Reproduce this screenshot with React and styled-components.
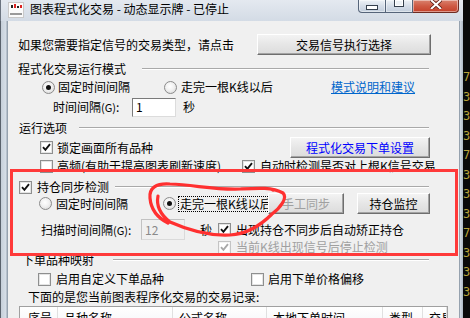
import React from 'react'
import styled, { createGlobalStyle } from 'styled-components'

const GlobalStyle = createGlobalStyle`
  html, body {
    margin: 0;
    padding: 0;
  }
  body {
    width: 470px;
    height: 318px;
    overflow: hidden;
    background: #0b0b0b;
    font-family: "Noto Sans CJK SC", "Noto Sans", sans-serif;
    font-size: 12px;
    line-height: 14px;
    color: #000;
  }
`

const Screen = styled.div`
  position: relative;
  width: 470px;
  height: 318px;
  display: flex;
  overflow: hidden;
`

const Window = styled.div`
  width: 463px;
  display: flex;
  flex-direction: column;
  flex: none;
`

const TitleBar = styled.div`
  height: 21px;
  display: flex;
  align-items: flex-start;
  background: linear-gradient(to bottom, #e4e9f0, #d3dbe5);
  box-shadow: inset 1px 0 0 #6b7480;
`

const AppIcon = styled.svg`
  margin: 2px 0 0 8px;
  flex: none;
`

const Title = styled.div`
  margin-left: 6px;
  line-height: 17px;
  white-space: nowrap;
`

const Caption = styled.div`
  margin-left: auto;
  margin-right: 4px;
  display: flex;
`

const CapButton = styled.div`
  box-sizing: border-box;
  width: ${p => p.$w}px;
  height: 13px;
  display: flex;
  align-items: flex-start;
  justify-content: center;
  overflow: hidden;
  border: 1px solid ${p => (p.$close ? '#6e2c22' : '#56657a')};
  border-top: none;
  border-left-width: ${p => (p.$first ? 1 : 0)}px;
  border-radius: ${p => (p.$first ? '0 0 0 4px' : p.$close ? '0 0 4px 0' : '0')};
  background: ${p =>
    p.$close
      ? 'linear-gradient(to bottom, #d9826f, #cf5a44 50%, #c4402a)'
      : 'linear-gradient(to bottom, #eef2f7, #d5dde8 50%, #c2cedc)'};
  box-shadow: inset 0 0 0 1px rgba(255, 255, 255, 0.45);
`

const MinGlyph = styled.div`
  margin-top: 5px;
  width: 10px;
  height: 3px;
  border: 1px solid #36404d;
  background: #fff;
`

const MaxGlyph = styled.div`
  margin-top: 0px;
  width: 8px;
  height: 6px;
  border: 1px solid #36404d;
  border-top: none;
  background: #eef2f6;
  box-shadow: inset 0 0 0 1px #fff;
`

const WindowBody = styled.div`
  display: flex;
  flex: 1;
  min-height: 0;
`

const LeftFrame = styled.div`
  width: 8px;
  flex: none;
  background: linear-gradient(
    to right,
    #5a626c 0,
    #5a626c 1px,
    #c6cfd9 1px,
    #d6dee7 6px,
    #96a2af 7px,
    #96a2af 8px
  );
`

const RightFrame = styled.div`
  width: 4px;
  flex: none;
  background: linear-gradient(to right, #96a2af 0, #96a2af 1px, #d3dbe4 1px, #aeb9c5 4px);
`

const Client = styled.div`
  width: 451px;
  flex: none;
  background: #f0f0f0;
  overflow: hidden;
  display: flex;
  flex-direction: column;
`

const Strip = styled.div`
  width: 7px;
  flex: none;
  background: #0a0a0a;
  padding-top: 68px;
  box-sizing: border-box;
  overflow: hidden;
  font-family: "DejaVu Sans Mono", monospace;
  font-size: 12px;
  line-height: 19.5px;
  color: #b8a23a;
  white-space: nowrap;
`

const Row = styled.div`
  display: flex;
  align-items: center;
  flex: none;
  height: ${p => p.$h}px;
  margin-top: ${p => p.$mt || 0}px;
  padding-left: ${p => p.$pl || 0}px;
  padding-right: ${p => p.$pr || 0}px;
  white-space: nowrap;
`

const Cell = styled.div`
  width: ${p => p.$w}px;
  flex: none;
  display: flex;
  align-items: center;
  padding-left: ${p => p.$pl || 0}px;
  box-sizing: border-box;
  color: ${p => (p.$dim ? '#a0a0a0' : '#000')};
`

const Accel = styled.span`
  font-size: 11px;
`

const Rule = styled.div`
  flex: 1;
  height: 0;
  border-top: 1px solid #a9a9a9;
  border-bottom: 1px solid #ffffff;
`

const Button = styled.button`
  box-sizing: border-box;
  width: ${p => p.$w}px;
  height: 21px;
  flex: none;
  margin: 0 0 0 ${p => p.$ml || 0}px;
  padding: 0;
  font: inherit;
  color: ${p => (p.disabled ? '#a0a0a0' : p.$blue ? '#0000ff' : '#000')};
  background: linear-gradient(to bottom, #f3f3f3, #e6e6e6 50%, #dcdcdc);
  border: 1px solid;
  border-color: #ffffff #6e6e6e #6e6e6e #ffffff;
  box-shadow: inset -1px -1px 0 #a3a3a3;
`

const TextBox = styled.div`
  box-sizing: border-box;
  width: 44px;
  height: ${p => p.$h}px;
  flex: none;
  padding-left: 3px;
  display: flex;
  align-items: center;
  background: ${p => (p.$off ? '#f0f0f0' : '#ffffff')};
  color: ${p => (p.$off ? '#8a8a8a' : '#000')};
  border: 1px solid ${p => (p.$off ? '#c2c2c2' : '#7a7a7a')};
  border-right-color: ${p => (p.$off ? '#dadada' : '#dcdcdc')};
  border-bottom-color: ${p => (p.$off ? '#dadada' : '#dcdcdc')};
`

const Option = styled.label`
  width: ${p => (p.$w ? `${p.$w}px` : 'auto')};
  flex: none;
  display: flex;
  align-items: center;
  gap: ${p => p.$gap || 4}px;
  color: ${p => (p.$dim ? '#a0a0a0' : '#000')};
`

const RadioDot = styled.span`
  box-sizing: border-box;
  width: 13px;
  height: 13px;
  flex: none;
  border-radius: 50%;
  border: 1px solid #8b8b8b;
  background: radial-gradient(circle at 45% 40%, #ffffff 0, #f1f1f1 45%, #d2d2d2 100%);
  display: flex;
  align-items: center;
  justify-content: center;
  &::after {
    content: '';
    width: 5px;
    height: 5px;
    border-radius: 50%;
    background: ${p => (p.$on ? '#111' : 'transparent')};
  }
`

const Box = styled.span`
  box-sizing: border-box;
  width: 13px;
  height: 13px;
  flex: none;
  display: flex;
  align-items: center;
  justify-content: center;
  border: 1px solid ${p => (p.$dim ? '#c4c4c4' : '#8e8f8f')};
  background: #fff;
  box-shadow: inset 0 0 0 1px ${p => (p.$dim ? '#f4f4f4' : '#e4e4e4')};
`

const Focus = styled.span`
  outline: 1px dotted #000;
  outline-offset: 0;
  padding: 0 1px;
`

const LinkText = styled.span`
  color: #0066cc;
  text-decoration: underline;
`

const ListView = styled.div`
  margin: 2px 0 0 11px;
  width: 429px;
  height: 40px;
  flex: none;
  box-sizing: border-box;
  border: 1px solid #a0a0a0;
  background: #fff;
`

const HeaderRow = styled.div`
  display: flex;
  height: 21px;
  background: linear-gradient(to bottom, #ffffff, #f4f5f7);
  border-bottom: 1px solid #e5e5e5;
`

const HeadCell = styled.div`
  box-sizing: border-box;
  width: ${p => p.$w}px;
  flex: none;
  padding-left: ${p => p.$pl || 6}px;
  border-right: 1px solid #e0e0e0;
  line-height: 21px;
  white-space: nowrap;
  overflow: hidden;
`

const Annotation = styled.div`
  position: absolute;
  left: 10px;
  top: 169px;
  width: 448px;
  height: 87px;
  box-sizing: border-box;
  border: 3px solid #ff3a3a;
  pointer-events: none;
`

const Scribble = styled.svg`
  position: absolute;
  left: 0;
  top: 0;
  pointer-events: none;
`

const Check = ({ dim }) => (
  <svg width="9" height="9" viewBox="0 0 9 9">
    <path d="M1 4.2 L3.4 6.8 L8 1.2" fill="none" stroke={dim ? '#a8a8a8' : '#111'} strokeWidth="1.9" />
  </svg>
)

const CheckBox = ({ on, dim }) => <Box $dim={dim}>{on && <Check dim={dim} />}</Box>

export default function App() {
  return (
    <Screen>
      <GlobalStyle />
      <Window>
        <TitleBar>
          <AppIcon width="16" height="16" viewBox="0 0 16 16">
            <rect x="0.5" y="0.5" width="15" height="15" fill="#fbfbfb" stroke="#c9c9c9" />
            <rect x="3" y="3" width="2" height="3" fill="#222" />
            <rect x="6" y="2" width="2" height="4" fill="#d22" />
            <rect x="9" y="4" width="2" height="2" fill="#222" />
            <rect x="12" y="3" width="2" height="3" fill="#d22" />
            <rect x="2" y="11" width="12" height="2" fill="#9a9a9a" />
          </AppIcon>
          <Title>图表程式化交易 - 动态显示牌 - 已停止</Title>
          <Caption>
            <CapButton $w={28} $first>
              <MinGlyph />
            </CapButton>
            <CapButton $w={27}>
              <MaxGlyph />
            </CapButton>
            <CapButton $w={46} $close>
              <svg width="12" height="9" viewBox="0 -3 12 9">
                <path d="M1 -3 L11 6 M11 -3 L1 6" stroke="#5a1d14" strokeWidth="3.6" />
                <path d="M1 -3 L11 6 M11 -3 L1 6" stroke="#fff" strokeWidth="2" />
              </svg>
            </CapButton>
          </Caption>
        </TitleBar>

        <WindowBody>
          <LeftFrame />
          <Client>
            <Row $h={21} $mt={13} $pl={10}>
              <Cell $w={239}>如果您需要指定信号的交易类型，请点击</Cell>
              <Button $w={174}>交易信号执行选择</Button>
            </Row>

            <Row $h={14} $mt={7} $pl={10} $pr={30}>
              <Cell $w={124}>程式化交易运行模式</Cell>
              <Rule />
            </Row>

            <Row $h={14} $mt={4} $pl={34}>
              <Option $w={122} $gap={3}>
                <RadioDot $on />
                固定时间间隔
              </Option>
              <Option $w={167} $gap={4}>
                <RadioDot />
                走完一根K线以后
              </Option>
              <LinkText>模式说明和建议</LinkText>
            </Row>

            <Row $h={20} $mt={3} $pl={45}>
              <Cell $w={79}>
                时间间隔<Accel>(G)</Accel>:
              </Cell>
              <TextBox $h={19}>1</TextBox>
              <Cell $w={40} $pl={7}>秒</Cell>
            </Row>

            <Row $h={14} $mt={4} $pl={11} $pr={30}>
              <Cell $w={60}>运行选项</Cell>
              <Rule />
            </Row>

            <Row $h={21} $mt={2} $pl={32}>
              <Option $w={250}>
                <CheckBox on />
                锁定画面所有品种
              </Option>
              <Button $w={140} $blue>
                程式化交易下单设置
              </Button>
            </Row>

            <Row $h={14} $mt={1} $pl={32}>
              <Option $w={202}>
                <CheckBox />
                高频(有助于提高图表刷新速度)
              </Option>
              <Option $gap={5}>
                <CheckBox on />
                自动时检测是否对上根K信号交易
              </Option>
            </Row>

            <Row $h={12} $mt={8} $pl={11} $pr={30}>
              <Option $w={96} $gap={5}>
                <CheckBox on />
                持仓同步检测
              </Option>
              <Rule />
            </Row>

            <Row $h={21} $mt={0} $pl={31}>
              <Option $w={124}>
                <RadioDot />
                固定时间间隔
              </Option>
              <Option $w={105} $gap={3}>
                <RadioDot $on />
                <Focus>走完一根K线以后</Focus>
              </Option>
              <Button $w={76} disabled>
                手工同步
              </Button>
              <Button $w={73} $ml={13}>
                持仓监控
              </Button>
            </Row>

            <Row $h={21} $mt={5} $pl={33}>
              <Cell $w={100}>
                扫描时间间隔<Accel>(G)</Accel>:
              </Cell>
              <TextBox $h={21} $off>
                12
              </TextBox>
              <Cell $w={33} $pl={15}>秒</Cell>
              <Option $gap={5}>
                <CheckBox on />
                出现持仓不同步后自动矫正持仓
              </Option>
            </Row>

            <Row $h={12} $mt={1} $pl={210}>
              <Option $gap={5} $dim>
                <CheckBox on dim />
                当前K线出现信号后停止检测
              </Option>
            </Row>

            <Row $h={12} $mt={1} $pl={14} $pr={30}>
              <Cell $w={91}>下单品种映射</Cell>
              <Rule />
            </Row>

            <Row $h={14} $mt={6} $pl={30}>
              <Option $w={213} $gap={5}>
                <CheckBox />
                启用自定义下单品种
              </Option>
              <Option $gap={4}>
                <CheckBox />
                启用下单价格偏移
              </Option>
            </Row>

            <Row $h={14} $mt={4} $pl={20}>
              下面的是您当前图表程序化交易的交易记录:
            </Row>

            <ListView>
              <HeaderRow>
                <HeadCell $w={38} $pl={8}>序号</HeadCell>
                <HeadCell $w={115}>品种名称</HeadCell>
                <HeadCell $w={94}>公式名称</HeadCell>
                <HeadCell $w={116}>本地下单时间</HeadCell>
                <HeadCell $w={40}>类型</HeadCell>
                <HeadCell $w={24}>交易</HeadCell>
              </HeaderRow>
            </ListView>
          </Client>
          <RightFrame />
        </WindowBody>
      </Window>

      <Strip>
        <div>7</div>
        <div>3</div>
        <div>3</div>
        <div>3</div>
        <div>7</div>
        <div>3</div>
        <div>3</div>
        <div>3</div>
        <div>7</div>
        <div>3</div>
        <div>3</div>
        <div>3</div>
      </Strip>

      <Annotation />
      <Scribble width="470" height="318" viewBox="0 0 470 318">
        <path
          d="M168 223 C158 218, 151 210, 150 198 C149 188, 156 183, 170 184 C195 185, 215 190, 240 189 C258 188, 272 187, 283 193 C288 198, 280 208, 272 214 C262 224, 248 234, 230 235 C210 236, 188 230, 170 222 C161 215, 156 206, 158 196"
          fill="none"
          stroke="#ff3030"
          strokeWidth="3.2"
          strokeLinecap="round"
          strokeLinejoin="round"
        />
        <circle cx="273" cy="190" r="1.8" fill="#ff3030" />
      </Scribble>
    </Screen>
  )
}
